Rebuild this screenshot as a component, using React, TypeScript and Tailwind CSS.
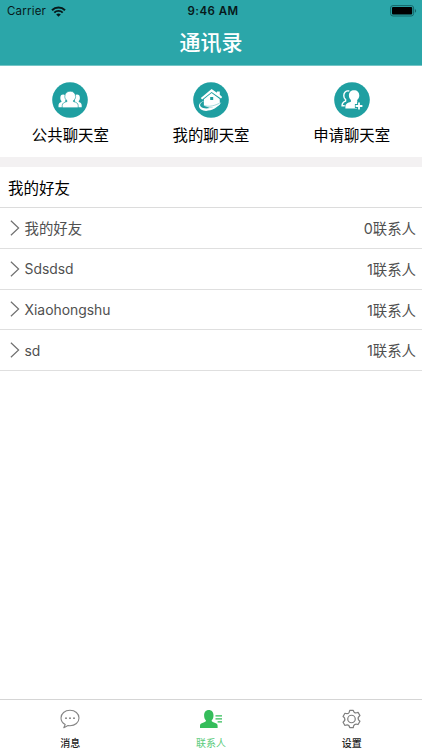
import type { ReactNode } from "react";

function Wifi() {
  return (
    <svg width="15" height="11" viewBox="0 0 15 11" fill="none" stroke="#07191a">
      <path d="M1 4.2a9.2 9.2 0 0 1 13 0" strokeWidth="2" />
      <path d="M3.3 6.6a5.9 5.9 0 0 1 8.4 0" strokeWidth="1.9" />
      <path d="M7.5 10.8 5.2 8.5a3.3 3.3 0 0 1 4.6 0Z" fill="#07191a" stroke="none" />
    </svg>
  );
}

function Battery() {
  return (
    <svg width="27" height="12" viewBox="0 0 27 12">
      <rect x="0.6" y="0.6" width="23" height="10.4" rx="2.4" fill="none" stroke="#146668" strokeWidth="1" />
      <rect x="2" y="2" width="20.2" height="7.6" rx="1" fill="#000" />
      <path d="M24.9 4v3.8c1.6-.5 1.6-3.3 0-3.8Z" fill="#146668" />
    </svg>
  );
}

function Disc({ children }: { children: ReactNode }) {
  return (
    <svg width="36" height="36" viewBox="0 0 36 36">
      <circle cx="18" cy="18" r="17.8" fill="#1f9fa1" />
      {children}
    </svg>
  );
}

function GroupIcon() {
  return (
    <Disc>
      <g fill="#fff">
        <ellipse cx="11.2" cy="16" rx="2.9" ry="3.4" />
        <ellipse cx="25" cy="16" rx="2.9" ry="3.4" />
        <path d="M6.500 25.500v-2c0-1.900.9-2.800 2.900-3.500l.3-2h3.200l2 7.500Z" />
        <path d="M29.700 25.500v-2c0-1.900-.9-2.800-2.900-3.500l-.3-2h-3.200l-2 7.500Z" />
      </g>
      <path
        d="M10.200 26.200v-2.700c0-2.300 2-3.300 4.800-4v-.8c-1.400-1-2.200-2.400-2.200-4.200 0-3.300 2.300-5.300 5.400-5.300s5.400 2 5.400 5.300c0 1.800-.8 3.200-2.200 4.200v.8c2.800.7 4.800 1.700 4.800 4v2.700Z"
        fill="#fff"
        stroke="#1f9fa1"
        strokeWidth="0.7"
      />
      <path d="M6 25.500h25v2H6Z" fill="#1f9fa1" />
    </Disc>
  );
}

function HouseIcon() {
  return (
    <Disc>
      <path d="M7.800 16 18.600 7l5.300 3.700V9.500h2.900v3.300l2.400 2.100-1.200 1.700-9.400-6.600-9.500 7.600Z" fill="#fff" />
      <path d="m10.900 17.300 7.700-6.300 8.100 5.900.2 5.600c-3 2.200-6.900 3.400-10.300 3.300l-5.700-2Z" fill="#fff" />
      <path d="M11.300 19c-4 1.600-5.100 4-3.400 5.800 3.500 3.500 14.100 1.500 20.500-4.700-3.900 7.200-15.200 11-20.400 7.400-3.900-2.900-1.900-7.700 3.300-8.500Z" fill="#fff" />
      <path d="M10.200 22.800c2.500 2.300 9.900 1.900 16.100-1.500" fill="none" stroke="#1f9fa1" strokeWidth="0.400" />
      <path d="M17.200 15h3v3h-3Z" fill="#1f9fa1" />
    </Disc>
  );
}

function AddPersonIcon() {
  return (
    <Disc>
      <path d="M15.300 9c-3.600-.8-5.600 1.600-5.500 4.700 0 1.700.7 3 1.800 3.900v1.500c-2.300.8-3.500 1.900-3.500 4.200v.5h2.600" fill="none" stroke="#fff" strokeWidth="1.400" />
      <path d="M11.400 26.600v-1.900c0-2.800 2.200-3.900 5.500-4.900v-1.900c-1.300-1.100-2-2.600-2-4.400 0-3.400 2.100-5.300 5.200-5.300s5.200 2 5.200 5.300c0 1.800-.8 3.400-2.100 4.400v1.900l2 .8v6Z" fill="#fff" />
      <path d="M25 19.900v8M20.900 24h8.200" stroke="#1f9fa1" strokeWidth="3.800" />
      <path d="M25 20.600v6.800M21.600 24h6.800" stroke="#fff" strokeWidth="1.800" />
    </Disc>
  );
}

function MessageIcon() {
  return (
    <svg width="22" height="20" viewBox="0 0 22 20">
      <path d="M6.200 15.500 4.800 18.700l4.200-2.100c.7.100 1.400.1 2 .1 5.100 0 9-3.300 9-7.700s-3.900-7.700-9-7.700-9 3.300-9 7.700c0 2.600 1.600 5.100 4.200 6.500Z" fill="none" stroke="#858585" strokeWidth="1.100" strokeLinejoin="round" />
      <g fill="#777">
        <circle cx="7" cy="9.200" r="0.900" />
        <circle cx="11" cy="9.200" r="0.900" />
        <circle cx="15" cy="9.200" r="0.900" />
      </g>
    </svg>
  );
}

function ContactIcon() {
  return (
    <svg width="24" height="20" viewBox="0 0 24 20" fill="#35bd5b">
      <path d="M1 19v-2.300c0-1.800 1.200-2.300 3-3 1.800-.6 3-.9 3-2.200-1.200-1.100-1.900-2.800-1.900-5C5.100 3 6.900.9 9.800.9s4.700 2.100 4.700 5.600c0 2.200-.7 3.900-1.900 5 0 1.300 1.200 1.600 3 2.200 1.800.7 3 1.200 3 3V19Z" />
      <path d="M16.500 6.200H23v1.300h-6.500ZM16.500 9.200H23v1.300h-6.500ZM18.600 12.200H23v1.300h-4.400Z" />
    </svg>
  );
}

function GearIcon() {
  return (
    <svg width="21" height="20" viewBox="0.400 0.400 19.200 19.200" fill="none" stroke="#7e7e7e" strokeWidth="1.150" strokeLinejoin="round">
      <path d="M8.300 1.200h3.400q.6 2.900 3.300 2.300l1.300-.4 1.800 3.100q-2.500 1.900-1.500 3.800.3.700 1.500 1.700l-1.800 3.100q-2.900-1.100-4 .8-.4.800-.6 2.100H8.300q-.6-2.900-3.300-2.400l-1.300.4-1.800-3.100q2.500-1.900 1.500-3.800-.3-.7-1.500-1.700l1.800-3.100q2.900 1.100 4-.8.4-.8.600-2Z" transform="translate(0 .5)" />
      <circle cx="10" cy="10" r="3.600" />
    </svg>
  );
}

const rooms = [
  { label: "公共聊天室", icon: <GroupIcon /> },
  { label: "我的聊天室", icon: <HouseIcon /> },
  { label: "申请聊天室", icon: <AddPersonIcon /> },
];

const groups = [
  { name: "我的好友", count: 0, size: "text-[14.400px]" },
  { name: "Sdsdsd", count: 1, size: "text-[13.900px]" },
  { name: "Xiaohongshu", count: 1, size: "text-[13.900px]" },
  { name: "sd", count: 1, size: "text-[13.900px]" },
];

const tabs = [
  { label: "消息", icon: <MessageIcon />, color: "text-[#222] font-medium" },
  { label: "联系人", icon: <ContactIcon />, color: "text-[#5ccb7c]" },
  { label: "设置", icon: <GearIcon />, color: "text-[#222] font-medium" },
];

export default function App() {
  return (
    <div className="flex h-[750px] w-[422px] flex-col overflow-hidden bg-white font-[Inter,'Noto_Sans_CJK_SC',sans-serif] text-black">
      <header className="h-[66px] shrink-0 border-b border-[#75c5c6] bg-[#2ba6a9]">
        <div className="grid h-[22px] grid-cols-3 items-center pr-[5px] pl-[7px] text-[11.500px] text-[#07191a]">
          <div className="flex items-center gap-[5px]">
            <span className="pt-[2px] tracking-[0.200px]">Carrier</span>
            <Wifi />
          </div>
          <span className="pt-[2px] pl-[2px] text-center font-semibold tracking-[0.450px]">9:46 AM</span>
          <div className="flex justify-end">
            <Battery />
          </div>
        </div>
        <h1 className="pt-px text-center text-[21px] leading-[40px] font-medium text-white">通讯录</h1>
      </header>

      <nav className="grid h-[91px] shrink-0 grid-cols-3">
        {rooms.map((room) => (
          <div key={room.label} className="flex flex-col items-center pt-4">
            {room.icon}
            <span className="mt-[7px] text-[15.400px] leading-[22px]">{room.label}</span>
          </div>
        ))}
      </nav>

      <div className="h-[10px] shrink-0 bg-[#f3f1f2]" />

      <main className="flex-1">
        <h2 className="flex h-[41px] items-center border-b border-[#dcdcdc] pt-[3px] pl-2 text-[15.500px]">我的好友</h2>
        {groups.map((group) => (
          <div key={group.name} className="flex h-[40.750px] items-center border-b border-[#dfdfdf] pr-[6px] pl-[10px] text-[14.400px] text-[#505050]">
            <svg width="10" height="16" viewBox="0 0 10 16" fill="none" stroke="#707070" strokeWidth="1.200">
              <path d="m.9.800 7.700 7.200-7.700 7.200" />
            </svg>
            <span className={`ml-[4.500px] flex-1 pt-[2px] ${group.size}`}>{group.name}</span>
            <span className="pt-[2px]">{group.count}联系人</span>
          </div>
        ))}
      </main>

      <footer className="grid h-[51px] shrink-0 grid-cols-3 border-t border-[#d5d5d5]">
        {tabs.map((tab) => (
          <div key={tab.label} className="flex flex-col items-center pt-[9px]">
            {tab.icon}
            <span className={`mt-[7px] text-[10px] leading-[15px] ${tab.color}`}>{tab.label}</span>
          </div>
        ))}
      </footer>
    </div>
  );
}
